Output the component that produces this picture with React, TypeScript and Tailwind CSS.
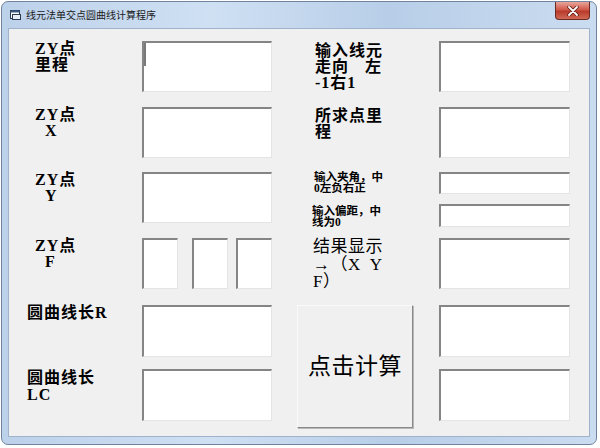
import React from "react";

// 线元法单交点圆曲线计算程序 - old VB form in a Win7 window
function Box({ className = "", caret = false }: { className?: string; caret?: boolean }) {
  return (
    <div
      className={`relative bg-white border-t-2 border-l-2 border-b border-r border-t-[#858585] border-l-[#858585] border-b-[#e4e4e4] border-r-[#e4e4e4] ${className}`}
    >
      {caret && <div className="absolute left-0 top-0 w-[2px] h-[23px] bg-[#7a7a7a]" />}
    </div>
  );
}

function TitleIcon() {
  return (
    <svg width="11" height="10" viewBox="0 0 11 10">
      <rect x="0.5" y="0.5" width="9" height="8" fill="#fff" stroke="#2b3a4e" />
      <rect x="0.5" y="0.5" width="9" height="2" fill="#3a5a86" />
      <rect x="2.5" y="4.5" width="8" height="5" fill="#e8eef6" stroke="#2b3a4e" />
    </svg>
  );
}

export default function App() {
  return (
    <div className="w-[600px] h-[448px] bg-white pl-[1px] pt-[1px] font-['Liberation_Serif','Noto_Sans_CJK_SC',serif] text-black">
      <div className="w-[596px] h-[444px] rounded-[7px] border border-[#6f839c] bg-[linear-gradient(90deg,#bcd1ea,#cfe0f3_35%,#b8cee8_65%,#cadcf0)] flex flex-col">
        {/* title bar */}
        <div className="h-[26px] flex items-start shrink-0">
          <div className="pl-[8px] pt-[8px]">
            <TitleIcon />
          </div>
          <div className="pl-[5px] pt-[6px] text-[10px] leading-[14px] text-[#1b1b1b] font-['Noto_Sans_CJK_SC',sans-serif]">
            线元法单交点圆曲线计算程序
          </div>
          <div className="ml-auto mr-[6px] w-[35px] h-[18px] rounded-b-[4px] border border-t-0 border-[#6b2a22] bg-[linear-gradient(180deg,#e8a59a,#d0594a_45%,#b83a2b_55%,#cf6a55)] flex items-center justify-center">
            <svg width="12" height="10" viewBox="0 0 12 10">
              <path d="M2 1 L10 9 M10 1 L2 9" stroke="#5a1a12" strokeWidth="3.4" strokeLinecap="round" />
              <path d="M2 1 L10 9 M10 1 L2 9" stroke="#fff" strokeWidth="1.8" strokeLinecap="round" />
            </svg>
          </div>
        </div>

        {/* client area */}
        <div className="flex-1 mx-[6px] mb-[7px] border border-[#9fb2cb] bg-[#f0f0f0] pt-[12px]">
          <div className="grid grid-cols-[133px_130px_25px_142px_131px] grid-rows-[66px_65px_66px_67px_64px_64px]">
            {/* row 1 */}
            <div className="pl-[26px] text-[16px] leading-[16px] font-bold tracking-[1px]">
              <div>ZY点</div>
              <div>里程</div>
            </div>
            <Box className="h-[51px]" caret />
            <div />
            <div className="pl-[18px] pt-[2px] text-[16px] leading-[16px] font-bold tracking-[1px]">
              <div>输入线元</div>
              <div>
                走向<span className="ml-[16px]">左</span>
              </div>
              <div>-1右1</div>
            </div>
            <Box className="h-[51px]" />

            {/* row 2 */}
            <div className="pl-[26px] text-[16px] leading-[16px] font-bold tracking-[1px]">
              <div>ZY点</div>
              <div className="pl-[10px]">X</div>
            </div>
            <Box className="h-[51px]" />
            <div />
            <div className="pl-[18px] pt-[1px] text-[16px] leading-[16px] font-bold tracking-[1px]">
              <div>所求点里</div>
              <div>程</div>
            </div>
            <Box className="h-[51px]" />

            {/* row 3 */}
            <div className="pl-[26px] text-[16px] leading-[16px] font-bold tracking-[1px]">
              <div>ZY点</div>
              <div className="pl-[10px]">Y</div>
            </div>
            <Box className="h-[51px]" />
            <div />
            <div className="pl-[17px] text-[11.5px] leading-[11px] font-bold">
              <div>输入夹角，中</div>
              <div>0左负右正</div>
              <div className="pt-[12px] -ml-[2px]">输入偏距，中</div>
              <div className="-ml-[2px]">线为0</div>
            </div>
            <div className="flex flex-col">
              <Box className="h-[22px]" />
              <Box className="h-[23px] mt-[10px]" />
            </div>

            {/* row 4 */}
            <div className="pl-[26px] text-[16px] leading-[16px] font-bold tracking-[1px]">
              <div>ZY点</div>
              <div className="pl-[10px]">F</div>
            </div>
            <div className="flex h-[51px]">
              <Box className="w-[36px] h-[51px]" />
              <Box className="w-[36px] h-[51px] ml-[14px]" />
              <Box className="w-[36px] h-[51px] ml-[8px]" />
            </div>
            <div />
            <div className="pl-[16px] text-[17px] leading-[17.5px] tracking-[0.5px]">
              <div>结果显示</div>
              <div className="whitespace-pre">→（X  Y</div>
              <div>F）</div>
            </div>
            <Box className="h-[51px]" />

            {/* row 5 */}
            <div className="pl-[18px] text-[16px] leading-[16px] font-bold tracking-[1px]">
              圆曲线长R
            </div>
            <Box className="h-[52px]" />
            <div />
            <div className="row-span-2 pb-[5px]">
              <button className="w-[116px] h-[123px] bg-[#f0f0f0] border border-t-[#fafafa] border-l-[#fafafa] border-r-[#8a8a8a] border-b-[#8a8a8a] shadow-[1px_1px_0_#b8b8b8] text-[23px] leading-[26px] tracking-[0.5px] flex items-center justify-center">
                点击计算
              </button>
            </div>
            <Box className="h-[52px]" />

            {/* row 6 */}
            <div className="pl-[18px] text-[16px] leading-[17px] font-bold tracking-[1px]">
              <div>圆曲线长</div>
              <div>LC</div>
            </div>
            <Box className="h-[52px]" />
            <div />
            <Box className="h-[52px]" />
          </div>
        </div>
      </div>
    </div>
  );
}
